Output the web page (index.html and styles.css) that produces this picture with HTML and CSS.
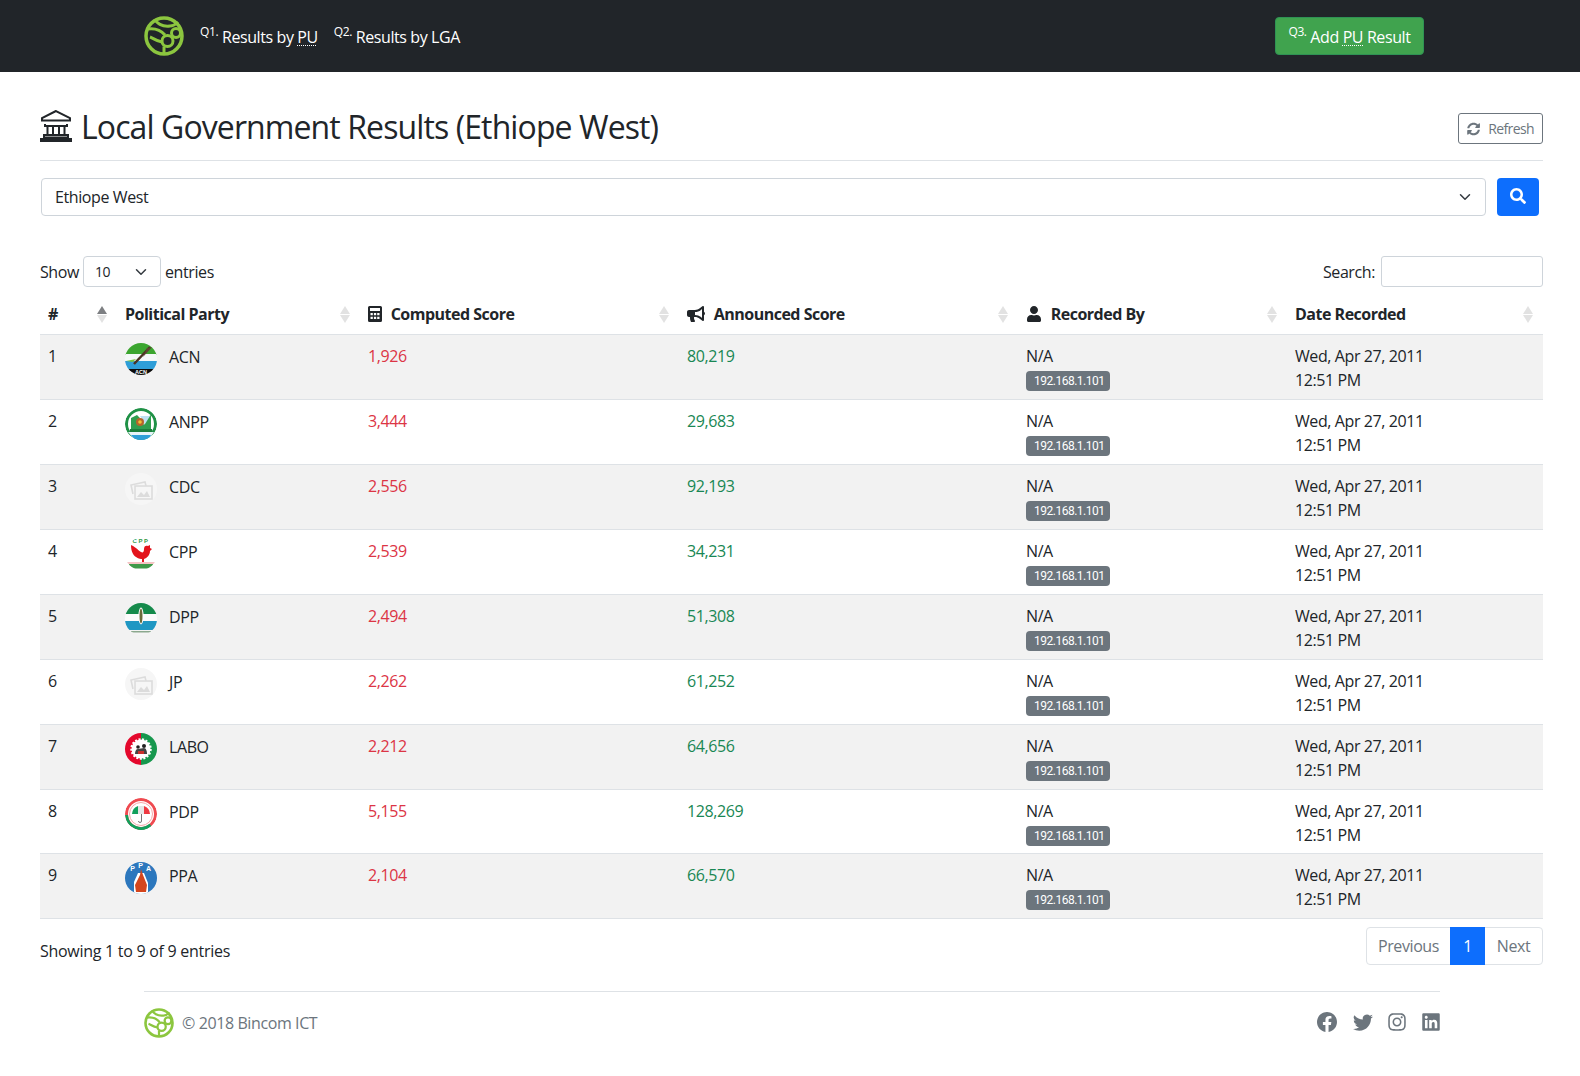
FILE: index.html
```html
<!DOCTYPE html>
<html lang="en">
<head>
    <meta charset="UTF-8">
    <meta name="viewport" content="width=device-width, initial-scale=1.0">
    <title>Local Government Results</title>
    <link rel="stylesheet" href="styles.css">
</head>
<body>
    <svg class="sprites" width="0" height="0" aria-hidden="true">
        <defs>
            <clipPath id="round"><circle cx="16" cy="16" r="16"/></clipPath>
            <symbol id="bincom" viewBox="0 0 40 40">
                <g fill="none" stroke="#8cc63f" stroke-width="3">
                    <circle cx="20" cy="20" r="18" stroke-width="3.500"/>
                    <circle cx="23.500" cy="25" r="5.500"/>
                    <circle cx="32" cy="17" r="4.500"/>
                    <path d="M3 13c6-1 13 0 18 6M11 3c1 4 7 8 15 7 3 0 6-2 8-4M6 21c3 1 6 4 12 5M20 30.500v8"/>
                </g>
            </symbol>
            <symbol id="blank" viewBox="0 0 32 32">
                <circle cx="16" cy="16" r="16" fill="#f6f6f6"/>
                <g fill="none" stroke="#dcdcdc" stroke-width="1.600">
                    <path d="M8 21l-2-9 14-3 1 4"/>
                    <rect x="10" y="13" width="17" height="13"/>
                </g>
                <path d="M12 24l4-5 3 3 3-4 3 6z" fill="#dcdcdc"/>
            </symbol>
            <symbol id="fa-user" viewBox="0 0 448 512">
                <path d="M224 256c70.7 0 128-57.3 128-128S294.7 0 224 0 96 57.3 96 128s57.3 128 128 128zm89.6 32h-16.7c-22.2 10.2-46.9 16-72.9 16s-50.6-5.8-72.9-16h-16.7C60.2 288 0 348.2 0 422.4V464c0 26.5 21.5 48 48 48h352c26.5 0 48-21.5 48-48v-41.6c0-74.2-60.2-134.4-134.4-134.4z"/>
            </symbol>
        </defs>
    </svg>

    <nav class="topbar">
        <div class="topbar-inner">
            <svg class="brand"><use href="#bincom"/></svg>
            <a class="nav-link" href="#"><sup>Q1.</sup> Results by <abbr>PU</abbr></a>
            <a class="nav-link" href="#"><sup>Q2.</sup> Results by LGA</a>
            <a class="btn-add" href="#"><sup>Q3.</sup> Add <abbr>PU</abbr> Result</a>
        </div>
    </nav>

    <main class="content">
        <header class="page-head">
            <h2>
                <svg class="title-icon" viewBox="0 0 32 33" fill="none" stroke="currentColor" stroke-width="2">
                    <path d="M16 2L2 9v2.500h28V9z"/>
                    <path d="M5 15v2h22v-2M7.500 17v9M13 17v9M19 17v9M24.500 17v9M4 26h24v2.500H4z"/>
                    <path d="M1 30h30v3H1z" fill="currentColor"/>
                </svg>
                Local Government Results (Ethiope West)
            </h2>
            <button class="btn-refresh" type="button">
                <svg viewBox="0 0 512 512"><path d="M370.72 133.28C339.458 104.008 298.888 87.962 255.848 88c-77.458.068-144.328 53.178-162.791 126.85-1.344 5.363-6.122 9.15-11.651 9.15H24.103c-7.498 0-13.194-6.807-11.807-14.176C33.933 94.924 134.813 8 256 8c66.448 0 126.791 26.136 171.315 68.685L463.03 40.97C478.149 25.851 504 36.559 504 57.941V192c0 13.255-10.745 24-24 24H345.941c-21.382 0-32.09-25.851-16.971-40.971l41.75-41.749zM32 296h134.059c21.382 0 32.09 25.851 16.971 40.971l-41.75 41.75c31.262 29.273 71.835 45.319 114.876 45.28 77.418-.07 144.315-53.144 162.787-126.849 1.344-5.363 6.122-9.15 11.651-9.15h57.304c7.498 0 13.194 6.807 11.807 14.176C478.067 417.076 377.187 504 256 504c-66.448 0-126.791-26.136-171.315-68.685L48.97 471.03C33.851 486.149 8 475.441 8 454.059V320c0-13.255 10.745-24 24-24z"/></svg>
                Refresh
            </button>
        </header>

        <form class="lga-form">
            <div class="select lga-select">
                <span>Ethiope West</span>
                <svg class="chevron" viewBox="0 0 16 16"><path d="M2 5l6 6 6-6" fill="none" stroke="#343a40" stroke-width="2" stroke-linecap="round" stroke-linejoin="round"/></svg>
            </div>
            <button class="btn-search" type="button">
                <svg viewBox="0 0 512 512"><path d="M505 442.7L405.3 343c-4.5-4.5-10.6-7-17-7H372c27.6-35.3 44-79.7 44-128C416 93.1 322.9 0 208 0S0 93.1 0 208s93.1 208 208 208c48.3 0 92.7-16.4 128-44v16.3c0 6.4 2.5 12.5 7 17l99.7 99.7c9.4 9.4 24.6 9.4 33.9 0l28.3-28.3c9.4-9.4 9.4-24.6.1-34zM208 336c-70.7 0-128-57.2-128-128 0-70.7 57.2-128 128-128 70.7 0 128 57.2 128 128 0 70.7-57.2 128-128 128z"/></svg>
            </button>
        </form>

        <div class="table-tools">
            <div class="length">
                Show
                <div class="select length-select">
                    <span>10</span>
                    <svg class="chevron" viewBox="0 0 16 16"><path d="M2 5l6 6 6-6" fill="none" stroke="#343a40" stroke-width="2" stroke-linecap="round" stroke-linejoin="round"/></svg>
                </div>
                entries
            </div>
            <div class="filter">Search: <input type="search"></div>
        </div>

        <table class="results">
            <colgroup>
                <col class="col-num"><col class="col-party"><col class="col-computed"><col class="col-announced"><col class="col-by"><col class="col-date">
            </colgroup>
            <thead>
                <tr>
                    <th class="sort-asc">#</th>
                    <th>Political Party</th>
                    <th>
                        <svg class="th-icon calc" viewBox="0 0 14 16"><path fill-rule="evenodd" d="M1.500 0h11A1.500 1.500 0 0 1 14 1.500v13a1.500 1.500 0 0 1-1.500 1.500h-11A1.500 1.500 0 0 1 0 14.500v-13A1.500 1.500 0 0 1 1.500 0zM2 2v3h10V2z"/><path fill="#fff" d="M2.500 7h2.300v2.300H2.500zM5.900 7h2.300v2.300H5.900zM9.200 7h2.300v2.300H9.200zM2.500 10.800h2.300v2.300H2.500zM5.900 10.800h2.300v2.300H5.900zM9.200 10.800h2.300v2.300H9.200z"/></svg>
                        Computed Score
                    </th>
                    <th>
                        <svg class="th-icon horn" viewBox="0 0 576 512"><path d="M576 240c0-23.63-12.95-44.04-32-55.12V32.01C544 23.26 537.02 0 512 0c-7.12 0-14.19 2.38-19.98 7.02l-85.03 68.03C364.28 109.19 310.66 128 256 128H64c-35.35 0-64 28.65-64 64v96c0 35.35 28.65 64 64 64h33.7c-1.39 10.48-2.18 21.14-2.18 32 0 39.77 9.26 77.35 25.56 110.94 5.19 10.69 16.52 17.06 28.4 17.06h74.28c26.05 0 41.69-29.84 25.9-50.56-16.4-21.52-26.15-48.36-26.15-77.44 0-11.11 1.62-21.79 4.41-32H256c54.66 0 108.28 18.81 150.98 52.95l85.03 68.03a32.023 32.023 0 0 0 19.98 7.02c24.92 0 32-22.78 32-32V295.13C563.05 284.04 576 263.63 576 240zm-96 141.42l-33.05-26.44C392.95 311.78 325.12 288 256 288v-96c69.12 0 136.95-23.78 190.95-66.98L480 98.58v282.84z"/></svg>
                        Announced Score
                    </th>
                    <th><svg class="th-icon user"><use href="#fa-user"/></svg> Recorded By</th>
                    <th>Date Recorded</th>
                </tr>
            </thead>
            <tbody>
                <tr>
                    <td>1</td>
                    <td><div class="party">
                        <svg class="avatar" viewBox="0 0 32 32"><g clip-path="url(#round)"><rect width="32" height="12" fill="#3ba52f"/><rect y="11" width="32" height="7" fill="#f4f8f8"/><rect y="18" width="32" height="8" fill="#2e9ed8"/><rect y="26" width="32" height="6" fill="#0b0b0b"/><path d="M25 4L9 21" stroke="#4b3423" stroke-width="2.500"/><path d="M22 5l5-1-9 10z" fill="#5d4632"/><path d="M1 18l7 1 3-3" fill="#7cc243"/><text x="16" y="31" class="logo-text acn">ACN</text></g></svg>
                        ACN
                    </div></td>
                    <td class="computed">1,926</td>
                    <td class="announced">80,219</td>
                    <td>N/A<br><span class="badge">192.168.1.101</span></td>
                    <td>Wed, Apr 27, 2011<br>12:51 PM</td>
                </tr>
                <tr>
                    <td>2</td>
                    <td><div class="party">
                        <svg class="avatar" viewBox="0 0 32 32"><g clip-path="url(#round)"><rect width="32" height="32" fill="#fff"/><circle cx="16" cy="16" r="14.500" fill="none" stroke="#1f9146" stroke-width="3"/><path d="M6 22V10l6-3 3 3 4 7 4-8 3-2v15z" fill="#2f9e4f"/><path d="M15 8l5 8 5-8z" fill="#bfe0f2"/><circle cx="15" cy="14" r="4" fill="#b5642c"/><circle cx="15" cy="14" r="1.800" fill="#f1c232"/><path d="M3 24h26l-4 6H8z" fill="#e8f3f9"/><path d="M6 27h20l-3 5H10z" fill="#2e9ed8"/><rect x="5" y="21" width="22" height="3" fill="#1c7f3d"/></g></svg>
                        ANPP
                    </div></td>
                    <td class="computed">3,444</td>
                    <td class="announced">29,683</td>
                    <td>N/A<br><span class="badge">192.168.1.101</span></td>
                    <td>Wed, Apr 27, 2011<br>12:51 PM</td>
                </tr>
                <tr>
                    <td>3</td>
                    <td><div class="party"><svg class="avatar"><use href="#blank"/></svg> CDC</div></td>
                    <td class="computed">2,556</td>
                    <td class="announced">92,193</td>
                    <td>N/A<br><span class="badge">192.168.1.101</span></td>
                    <td>Wed, Apr 27, 2011<br>12:51 PM</td>
                </tr>
                <tr>
                    <td>4</td>
                    <td><div class="party">
                        <svg class="avatar" viewBox="0 0 32 32"><g clip-path="url(#round)"><rect width="32" height="32" fill="#fff"/><text x="16" y="4.500" class="logo-text cpp">CPP</text><path d="M6 7c0 6 2 10 5 12 3 2 5 2 6 2v4h-3v1h6v-1h-1v-4c3-1 6-4 6-8l2-2-2-1V7l-2 1c-2-1-4 0-4 3s-1 4-3 3-4-4-10-7z" fill="#e3141c"/><rect y="24" width="32" height="2" fill="#f4c4c4"/><rect x="4" y="26" width="24" height="4.500" fill="#3f9a4a"/></g></svg>
                        CPP
                    </div></td>
                    <td class="computed">2,539</td>
                    <td class="announced">34,231</td>
                    <td>N/A<br><span class="badge">192.168.1.101</span></td>
                    <td>Wed, Apr 27, 2011<br>12:51 PM</td>
                </tr>
                <tr>
                    <td>5</td>
                    <td><div class="party">
                        <svg class="avatar" viewBox="0 0 32 32"><g clip-path="url(#round)"><rect width="32" height="11" fill="#158a4b"/><rect y="11" width="32" height="8" fill="#fbfbfb"/><rect y="18" width="32" height="9" fill="#1f97c3"/><rect y="27" width="32" height="5" fill="#f4f4f4"/><ellipse cx="16" cy="13" rx="2.600" ry="8.500" fill="#fff"/><ellipse cx="16" cy="13" rx="1.500" ry="7.500" fill="#6b6b3a"/><rect x="6" y="28" width="20" height="1.500" fill="#8ba88e"/></g></svg>
                        DPP
                    </div></td>
                    <td class="computed">2,494</td>
                    <td class="announced">51,308</td>
                    <td>N/A<br><span class="badge">192.168.1.101</span></td>
                    <td>Wed, Apr 27, 2011<br>12:51 PM</td>
                </tr>
                <tr>
                    <td>6</td>
                    <td><div class="party"><svg class="avatar"><use href="#blank"/></svg> JP</div></td>
                    <td class="computed">2,262</td>
                    <td class="announced">61,252</td>
                    <td>N/A<br><span class="badge">192.168.1.101</span></td>
                    <td>Wed, Apr 27, 2011<br>12:51 PM</td>
                </tr>
                <tr>
                    <td>7</td>
                    <td><div class="party">
                        <svg class="avatar" viewBox="0 0 32 32"><g clip-path="url(#round)"><rect width="16" height="32" fill="#e4082c"/><rect x="16" width="16" height="32" fill="#16974d"/><circle cx="16" cy="16" r="9.500" fill="#fff" stroke="#fff" stroke-width="2.500" stroke-dasharray="2 1.500"/><circle cx="13" cy="14" r="1.800" fill="#222"/><circle cx="19" cy="13" r="2" fill="#222"/><path d="M10 21c0-3 1-5 3-5l6-1c2 0 3 3 3 6z" fill="#444"/><rect x="13" y="18" width="6" height="3" fill="#c9302c"/></g></svg>
                        LABO
                    </div></td>
                    <td class="computed">2,212</td>
                    <td class="announced">64,656</td>
                    <td>N/A<br><span class="badge">192.168.1.101</span></td>
                    <td>Wed, Apr 27, 2011<br>12:51 PM</td>
                </tr>
                <tr>
                    <td>8</td>
                    <td><div class="party">
                        <svg class="avatar" viewBox="0 0 32 32"><g clip-path="url(#round)"><rect width="32" height="32" fill="#fff"/><circle cx="16" cy="16" r="14.500" fill="none" stroke="#ef4a50" stroke-width="3"/><path d="M1.500 17a14.500 14.500 0 0 0 24 10" fill="none" stroke="#12a05c" stroke-width="3"/><circle cx="16" cy="16" r="11.500" fill="none" stroke="#f7a5a8" stroke-width="1"/><path d="M7 16a9 9 0 0 1 6-8v8z" fill="#12a05c"/><path d="M19 8a9 9 0 0 1 6 8h-6z" fill="#ee3a42"/><path d="M13 16V8h6v8z" fill="#e6e6e6"/><path d="M16.500 16v7a1.500 1.500 0 0 1-3 0" fill="none" stroke="#777" stroke-width="1"/></g></svg>
                        PDP
                    </div></td>
                    <td class="computed">5,155</td>
                    <td class="announced">128,269</td>
                    <td>N/A<br><span class="badge">192.168.1.101</span></td>
                    <td>Wed, Apr 27, 2011<br>12:51 PM</td>
                </tr>
                <tr>
                    <td>9</td>
                    <td><div class="party">
                        <svg class="avatar" viewBox="0 0 32 32"><g clip-path="url(#round)"><rect width="32" height="32" fill="#2c77bd"/><path d="M9 32V20l4-9h6l4 10v11z" fill="#fff"/><path d="M11 30l-1-7 5-10 1-6 2 6 4 10-1 7z" fill="#d4461d"/><text x="7.500" y="9" class="logo-text ppa">P</text><text x="15.500" y="6" class="logo-text ppa">P</text><text x="23.500" y="9" class="logo-text ppa">A</text></g></svg>
                        PPA
                    </div></td>
                    <td class="computed">2,104</td>
                    <td class="announced">66,570</td>
                    <td>N/A<br><span class="badge">192.168.1.101</span></td>
                    <td>Wed, Apr 27, 2011<br>12:51 PM</td>
                </tr>
            </tbody>
        </table>

        <div class="table-foot">
            <div class="info">Showing 1 to 9 of 9 entries</div>
            <ul class="pagination">
                <li class="page-prev"><a href="#">Previous</a></li>
                <li class="page-current"><a href="#">1</a></li>
                <li class="page-next"><a href="#">Next</a></li>
            </ul>
        </div>
    </main>

    <footer class="site-foot">
        <div class="foot-brand">
            <svg class="foot-logo"><use href="#bincom"/></svg>
            © 2018 Bincom ICT
        </div>
        <div class="social">
            <svg class="social-fb" viewBox="0 0 16 16"><path d="M16 8.049c0-4.446-3.582-8.050-8-8.050C3.580 0-.002 3.603-.002 8.050c0 4.017 2.926 7.347 6.750 7.951v-5.625h-2.030V8.050H6.750V6.275c0-2.017 1.195-3.131 3.022-3.131.876 0 1.791.157 1.791.157v1.980h-1.009c-.993 0-1.303.621-1.303 1.258v1.510h2.218l-.354 2.326H9.250V16c3.824-.604 6.750-3.934 6.750-7.951z"/></svg>
            <svg viewBox="0 0 16 16"><path d="M5.026 15c6.038 0 9.341-5.003 9.341-9.334 0-.14 0-.282-.006-.422A6.685 6.685 0 0 0 16 3.542a6.658 6.658 0 0 1-1.889.518 3.301 3.301 0 0 0 1.447-1.817 6.533 6.533 0 0 1-2.087.793A3.286 3.286 0 0 0 7.875 6.030a9.325 9.325 0 0 1-6.767-3.429 3.289 3.289 0 0 0 1.018 4.382A3.323 3.323 0 0 1 .64 6.575v.045a3.288 3.288 0 0 0 2.632 3.218 3.203 3.203 0 0 1-.865.115 3.230 3.230 0 0 1-.614-.057 3.283 3.283 0 0 0 3.067 2.277A6.588 6.588 0 0 1 .78 13.580a6.320 6.320 0 0 1-.78-.045A9.344 9.344 0 0 0 5.026 15z"/></svg>
            <svg viewBox="0 0 448 512"><path d="M224.100 141c-63.600 0-114.900 51.300-114.900 114.900s51.300 114.900 114.900 114.900S339 319.500 339 255.900 287.700 141 224.100 141zm0 189.600c-41.100 0-74.700-33.500-74.700-74.700s33.500-74.700 74.700-74.700 74.700 33.500 74.700 74.700-33.600 74.700-74.700 74.700zm146.400-194.300c0 14.900-12 26.800-26.800 26.800-14.900 0-26.800-12-26.800-26.800s12-26.800 26.800-26.800 26.800 12 26.800 26.800zm76.100 27.200c-1.700-35.900-9.900-67.700-36.200-93.900-26.200-26.200-58-34.400-93.900-36.200-37-2.100-147.900-2.100-184.900 0-35.800 1.700-67.600 9.900-93.900 36.100s-34.400 58-36.200 93.900c-2.100 37-2.100 147.900 0 184.900 1.700 35.900 9.900 67.700 36.200 93.900s58 34.400 93.900 36.200c37 2.100 147.900 2.100 184.900 0 35.900-1.700 67.700-9.900 93.900-36.200 26.200-26.200 34.400-58 36.200-93.900 2.100-37 2.100-147.800 0-184.800zM398.800 388c-7.800 19.600-22.900 34.700-42.600 42.600-29.500 11.700-99.500 9-132.100 9s-102.700 2.600-132.100-9c-19.600-7.800-34.700-22.900-42.600-42.600-11.700-29.500-9-99.500-9-132.100s-2.600-102.700 9-132.100c7.800-19.600 22.900-34.700 42.600-42.600 29.500-11.700 99.500-9 132.100-9s102.700-2.600 132.100 9c19.600 7.800 34.700 22.900 42.600 42.600 11.700 29.500 9 99.500 9 132.100s2.700 102.700-9 132.100z"/></svg>
            <svg viewBox="0 0 448 512"><path d="M416 32H31.900C14.300 32 0 46.500 0 64.300v383.400C0 465.500 14.300 480 31.900 480H416c17.600 0 32-14.500 32-32.300V64.300c0-17.800-14.400-32.300-32-32.300zM135.400 416H69V202.200h66.500V416zm-33.200-243c-21.300 0-38.500-17.300-38.500-38.500S80.900 96 102.200 96c21.200 0 38.500 17.300 38.500 38.500 0 21.300-17.200 38.500-38.500 38.500zm282.100 243h-66.400V312c0-24.800-.5-56.700-34.500-56.700-34.600 0-39.900 27-39.900 54.900V416h-66.400V202.200h63.700v29.200h.9c8.900-16.800 30.600-34.500 62.900-34.500 67.200 0 79.700 44.300 79.700 101.900V416z"/></svg>
        </div>
    </footer>
</body>
</html>
```

FILE: styles.css
```css
* {
    box-sizing: border-box;
}
body {
    margin: 0;
    font-family: "Open Sans", Arial, sans-serif;
    font-size: 16px;
    line-height: 24px;
    letter-spacing: -0.4px;
    color: #212529;
    background: #fff;
}
a {
    text-decoration: none;
}
abbr {
    text-decoration: underline dotted 1px;
    text-underline-offset: 2px;
}
sup {
    font-size: 12px;
    line-height: 0;
    vertical-align: 7px;
}
.sprites {
    position: absolute;
}

.topbar {
    height: 72px;
    background: #212529;
}
.topbar-inner {
    display: flex;
    align-items: center;
    height: 100%;
    padding: 0 156px 0 144px;
}
.brand {
    width: 40px;
    height: 40px;
    margin-right: 16px;
}
.nav-link {
    margin-right: 16px;
    padding-top: 2px;
    color: #fff;
}
.btn-add {
    margin-left: auto;
    width: 149px;
    height: 38px;
    padding-top: 7px;
    text-align: center;
    color: #fff;
    background: #40a34e;
    border: 1px solid #2f9354;
    border-radius: 4px;
}

.content {
    padding: 0 37px 0 40px;
}
.page-head {
    display: flex;
    align-items: center;
    justify-content: space-between;
    height: 89px;
    padding-top: 21px;
    border-bottom: 1px solid #dee2e6;
}
.page-head h2 {
    display: flex;
    align-items: center;
    gap: 9px;
    margin: 0;
    font-size: 32px;
    font-weight: 400;
    line-height: 38px;
    letter-spacing: -0.9px;
}
.title-icon {
    width: 32px;
    height: 33px;
    margin-bottom: 2px;
}
.btn-refresh {
    display: flex;
    align-items: center;
    gap: 8px;
    width: 85px;
    height: 31px;
    margin-top: 4px;
    padding: 0 8px;
    font: inherit;
    font-size: 14px;
    letter-spacing: -0.6px;
    color: #6c757d;
    background: #fff;
    border: 1px solid #6c757d;
    border-radius: 3px;
}
.btn-refresh svg {
    width: 16px;
    height: 16px;
    fill: #6c757d;
}

.lga-form {
    display: flex;
    gap: 11px;
    padding: 17px 4px 0 1px;
}
.select {
    display: flex;
    align-items: center;
    justify-content: space-between;
    background: #fff;
    border: 1px solid #ced4da;
    border-radius: 4px;
}
.lga-select {
    flex: 1;
    height: 38px;
    padding: 0 12px 0 13px;
}
.chevron {
    width: 16px;
    height: 12px;
}
.btn-search {
    width: 42px;
    height: 38px;
    padding: 0;
    background: #0d6efd;
    border: 0;
    border-radius: 4px;
}
.btn-search svg {
    width: 16px;
    height: 16px;
    fill: #fff;
}

.table-tools {
    display: flex;
    align-items: center;
    justify-content: space-between;
    margin-top: 40px;
    height: 31px;
}
.length {
    display: flex;
    align-items: center;
    gap: 4px;
}
.length-select {
    width: 78px;
    height: 31px;
    padding: 0 11px;
    font-size: 14px;
}
.filter {
    display: flex;
    align-items: center;
    gap: 6px;
}
.filter input {
    width: 162px;
    height: 31px;
    border: 1px solid #ced4da;
    border-radius: 3px;
}

.results {
    width: 100%;
    margin-top: 8px;
    table-layout: fixed;
    border-collapse: collapse;
}
.col-num { width: 77px; }
.col-party { width: 243px; }
.col-computed { width: 319px; }
.col-announced { width: 339px; }
.col-by { width: 269px; }
.col-date { width: 256px; }
.results th {
    position: relative;
    height: 39px;
    padding: 0 8px;
    font-weight: 700;
    letter-spacing: -0.5px;
    text-align: left;
    white-space: nowrap;
    border-bottom: 1px solid #dee2e6;
}
.results th::before,
.results th::after {
    content: "";
    position: absolute;
    right: 10px;
    width: 0;
    height: 0;
    border-left: 5px solid transparent;
    border-right: 5px solid transparent;
}
.results th::before {
    top: 11px;
    border-bottom: 8px solid #e2e2e2;
}
.results th::after {
    top: 20px;
    border-top: 8px solid #e2e2e2;
}
.results th.sort-asc::before {
    border-bottom-color: #7d7f82;
}
.th-icon {
    display: inline-block;
    height: 16px;
    margin-right: 5px;
    vertical-align: -2px;
    fill: #212529;
}
.calc { width: 14px; }
.horn { width: 18px; }
.user { width: 16px; }
.results td {
    height: 65px;
    padding: 9px 8px 7px;
    vertical-align: top;
    border-bottom: 1px solid #dee2e6;
}
.results tbody tr:nth-child(8) td {
    height: 64px;
    padding-bottom: 6px;
}
.results tbody tr:nth-child(odd) td {
    background: #f2f2f2;
}
.party {
    display: flex;
    align-items: flex-start;
    gap: 12px;
    height: 31px;
    padding-top: 1px;
}
.avatar {
    width: 32px;
    height: 32px;
    margin-top: -2px;
    flex: none;
}
.logo-text {
    font-family: "Liberation Sans", Arial, sans-serif;
    font-weight: 700;
    letter-spacing: 0;
}
.acn { font-size: 5.5px; fill: #fff; text-anchor: middle; }
.cpp { font-size: 6px; fill: #2f9a47; text-anchor: middle; letter-spacing: 1.5px; }
.ppa { font-size: 7px; fill: #fff; text-anchor: middle; }
.computed { color: #dc3545; }
.announced { color: #198754; }
.badge {
    display: block;
    margin-top: 3px;
    padding: 0 8px;
    width: 84px;
    height: 20px;
    font-family: "Roboto", Arial, sans-serif;
    font-size: 12px;
    line-height: 20px;
    letter-spacing: -0.5px;
    white-space: nowrap;
    color: #fff;
    background: #6c757d;
    border-radius: 4px;
}

.table-foot {
    display: flex;
    justify-content: space-between;
    margin-top: 8px;
}
.info {
    padding-top: 12px;
    letter-spacing: -0.28px;
}
.pagination {
    display: flex;
    margin: 0;
    padding: 0;
    list-style: none;
}
.pagination a {
    display: block;
    height: 38px;
    padding: 6px 0;
    text-align: center;
    color: #6c757d;
    background: #fff;
    border: 1px solid #dee2e6;
}
.pagination li + li {
    margin-left: -1px;
}
.page-prev { width: 85px; }
.page-current { width: 35px; }
.page-next { width: 59px; }
.pagination .page-prev a {
    border-radius: 4px 0 0 4px;
}
.pagination .page-next a {
    border-radius: 0 4px 4px 0;
}
.pagination .page-current a {
    position: relative;
    color: #fff;
    background: #0d6efd;
    border-color: #0d6efd;
}

.site-foot {
    display: flex;
    justify-content: space-between;
    margin: 26px 140px 0 144px;
    padding-top: 16px;
    border-top: 1px solid #dee2e6;
    color: #6c757d;
}
.foot-brand {
    display: flex;
    align-items: center;
    gap: 8px;
}
.foot-logo {
    width: 30px;
    height: 30px;
}
.social {
    display: flex;
    gap: 14px;
    height: 20px;
    margin: 4px -1px 0 0;
}
.social svg {
    width: 20px;
    height: 20px;
    fill: #6c757d;
}
.social .social-fb {
    margin-right: 2px;
}
```
